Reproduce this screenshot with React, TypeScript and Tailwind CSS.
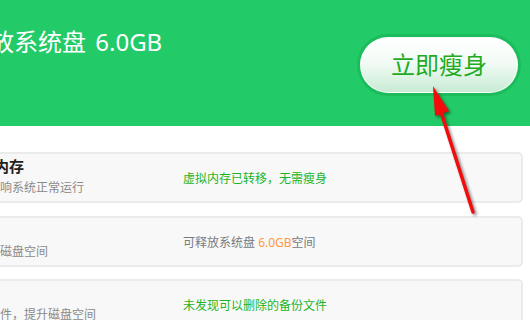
import React from "react";

type Row = {
  title: string;
  desc: string;
  status: React.ReactNode;
};

const rows: Row[] = [
  {
    title: "虚拟内存",
    desc: "不会影响系统正常运行",
    status: <span className="text-[#1db41d]">虚拟内存已转移，无需瘦身</span>,
  },
  {
    title: "瘦身",
    desc: "可释放磁盘空间",
    status: (
      <span className="text-[#7a7a7a]">
        可释放系统盘 <span className="text-[#ff9a3c]">6.0GB</span>空间
      </span>
    ),
  },
  {
    title: "备份",
    desc: "备份文件，提升磁盘空间",
    status: <span className="text-[#1db41d]">未发现可以删除的备份文件</span>,
  },
];

const Arrow = () => (
  <svg
    className="absolute inset-0 pointer-events-none drop-shadow-[2px_2px_1.5px_rgba(0,0,0,0.45)]"
    width="530"
    height="320"
    viewBox="0 0 530 320"
  >
    <line x1="441" y1="112" x2="473" y2="212" stroke="#f20c0c" strokeWidth="3.5" strokeLinecap="round" />
    <polygon points="433,86 449,111 435,116" fill="#f20c0c" />
  </svg>
);

export default function App() {
  return (
    <div className="relative w-[530px] h-[320px] overflow-hidden bg-white font-['Noto_Sans','Noto_Sans_CJK_SC',sans-serif]">
      {/* header */}
      <div className="h-[126px] bg-[#22cb67] flex items-start justify-between">
        <h1 className="mt-[29px] -ml-[34px] text-[24px] leading-[26px] text-white whitespace-nowrap font-normal">
          释放系统盘 <span className="ml-[3px]">6.0GB</span>
        </h1>
        <button className="mt-[37px] mr-[12px] w-[158px] h-[56px] rounded-full border border-white/80 bg-[linear-gradient(180deg,#ffffff_0%,#f3fbf6_45%,#c7ebd3_100%)] shadow-[0_0_0_3px_rgba(0,110,40,0.16)] text-[24px] leading-none text-[#1fab1f]">
          立即瘦身
        </button>
      </div>

      {/* list */}
      <div className="flex flex-col gap-[12.5px] pt-[26px] -ml-[60px] mr-[7px]">
        {rows.map((r) => (
          <div
            key={r.title}
            className="h-[51px] shrink-0 flex items-start border-2 border-[#ebebeb] bg-[#f8f8f8] rounded-[5px] pl-[22px]"
          >
            <div className="w-[219px] shrink-0 flex flex-col gap-[4px] pt-[2px] whitespace-nowrap">
              <div className="text-[15px] leading-[20px] font-bold text-[#222]">{r.title}</div>
              <div className="text-[12px] leading-[16px] text-[#8a8a8a]">{r.desc}</div>
            </div>
            <div className="pt-[17px] text-[12px] leading-[16px] whitespace-nowrap">{r.status}</div>
          </div>
        ))}
      </div>

      <Arrow />
    </div>
  );
}
